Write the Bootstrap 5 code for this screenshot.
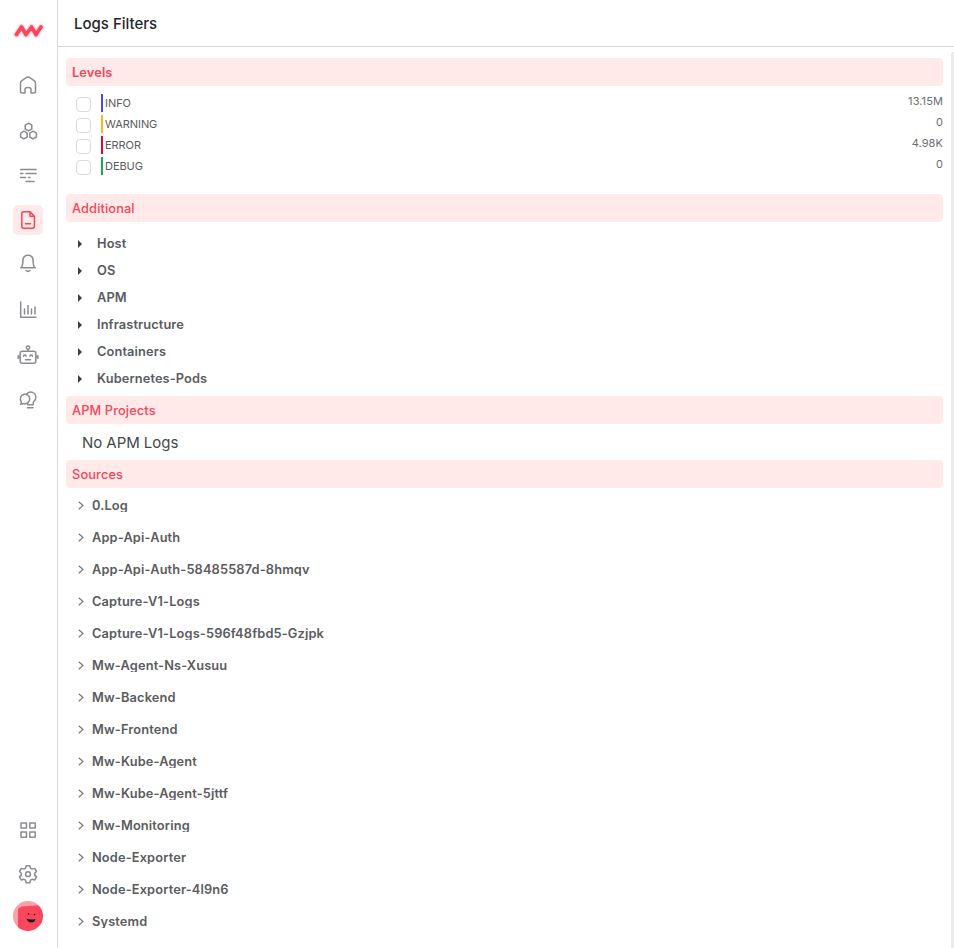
<!DOCTYPE html>
<html lang="en">
<head>
<meta charset="utf-8">
<meta name="viewport" content="width=device-width, initial-scale=1">
<title>Logs Filters</title>
<link href="https://cdn.jsdelivr.net/npm/bootstrap@5.3.0/dist/css/bootstrap.min.css" rel="stylesheet">
<style>
body{font-family:Inter,"Liberation Sans",sans-serif;color:#5a5b60;font-size:12.800px;letter-spacing:.12px;background:#fff}
.side{width:58px;border-right:1px solid #d9d9db;padding-right:1px}
.brand-mark{height:62px;padding-top:16px}
.side-link{height:45px;color:#8b8c90}
.side svg{display:block;fill:none;stroke:currentColor;stroke-width:1.5;stroke-linecap:round;stroke-linejoin:round}
.tile{width:30px;height:30px;border-radius:5px}
.tile.on{background:#ffeae9;color:#f5455c}
.side-foot{padding-bottom:17px}
.account{margin-top:4px}
.top{height:47px;border-bottom:1px solid #d9d9db;padding:2px 0 0 16px}
.top h1{font-size:15px;font-weight:500;color:#26262e;letter-spacing:0}
.filters{padding:11px 8px 0}
.head{height:28px;background:#ffeae9;color:#f5455c;border-radius:4px;padding:1px 0 0 6px;font-weight:500}
.head.first{font-weight:600}
.levels{padding:8px 0 16px 10px}
.level{height:21px;font-size:11px;line-height:18px;letter-spacing:-.05px}
.level .form-check-input{width:15px;height:15px;margin:3px 10px 0 0;border:1px solid #d9d9dc;border-radius:4px}
.tick{width:2px;height:18px;margin-right:2px}
.info{background:#4b48e5}.warning{background:#fcbc05}.error{background:#d90746}.debug{background:#0caf52}
.count{margin-top:-2px;color:#6d6e72;letter-spacing:.1px}
.extra{padding:8px 0 4px 12px}
.extra-row{height:27px;font-weight:600}
.extra-row svg{width:4px;height:8px;margin-right:15px;fill:#3d3e43}
.empty{height:36px;padding:2px 0 0 16px;font-size:15px;color:#45464c;letter-spacing:-.05px}
.sources{padding-left:12px;padding-top:1px}
.source{height:32px}
.source svg{width:6px;height:9px;margin-right:8px;margin-top:1px;fill:none;stroke:#77787c;stroke-width:1.2}
.source span{font-weight:600;line-height:13px;height:13px;overflow:hidden;letter-spacing:.15px}
.rail{width:3px;margin-top:5px;background:#ebebec;border-radius:3px 0 0 0}
</style>
</head>
<body class="vh-100 overflow-hidden">
<div class="d-flex h-100">
<nav class="side d-flex flex-column align-items-center flex-shrink-0">
  <div class="brand-mark"><svg width="36" height="28" viewBox="0 0 36 28"><path d="M6.500 18.500L11.500 11L16 18.500L21.500 11L26 18.500L31 11" stroke="#ffdadd" stroke-width="6.500"/><path d="M6.500 18.500L11.500 11L16 18.500L21.500 11L26 18.500L31 11" stroke="#f9465d" stroke-width="3.800"/></svg></div>
  <a class="side-link d-flex align-items-center" href="#" aria-label="Home"><span class="tile"><svg width="30" height="30" viewBox="0 0 30 30"><path d="M7.500 13Q7.500 11.700 8.500 10.900L13.400 7.500Q15 6.500 16.600 7.500L21.500 10.900Q22.500 11.700 22.500 13V21Q22.500 23 20.500 23H18V19.500Q18 17.500 15 17.500T12 19.500V23H9.500Q7.500 23 7.500 21Z"/></svg></span></a>
  <a class="side-link d-flex align-items-center" href="#" aria-label="Infrastructure"><span class="tile"><svg width="30" height="30" viewBox="0 0 30 30"><path d="M15.500 8.200L18.800 10.100V14L15.500 15.900L12.200 14V10.100ZM10.900 16.200L14.200 18.100V22L10.900 23.900L7.600 22V18.100ZM20.100 16.200L23.400 18.100V22L20.100 23.900L16.800 22V18.100Z"/></svg></span></a>
  <a class="side-link d-flex align-items-center" href="#" aria-label="Traces"><span class="tile"><svg width="30" height="30" viewBox="0 0 30 30"><path d="M7.500 9.500H23M7.500 13.500H10M13 13.500H23M7.500 17.500H12.500M15.500 17.500H17M13 21.500H21"/></svg></span></a>
  <a class="side-link d-flex align-items-center" href="#" aria-label="Logs"><span class="tile on"><svg width="30" height="30" viewBox="0 0 30 30"><path d="M10.700 6.800H17L21.400 11.200V21.300Q21.400 23.200 19.500 23.200H10.700Q8.800 23.200 8.800 21.300V8.700Q8.800 6.800 10.700 6.800ZM17 6.800V11.200H21.400M12.500 18.700H17.500"/></svg></span></a>
  <a class="side-link d-flex align-items-center" href="#" aria-label="Alerts"><span class="tile"><svg width="30" height="30" viewBox="0 0 30 30"><path d="M7.800 17.800Q9.800 16.500 9.800 11.800C9.800 7.500 11.800 5.300 15 5.300S20.200 7.500 20.200 11.800Q20.200 16.500 22.200 17.800ZM13 20.500Q15 22.300 17 20.500"/></svg></span></a>
  <a class="side-link d-flex align-items-center" href="#" aria-label="Dashboards"><span class="tile"><svg width="30" height="30" viewBox="0 0 30 30"><path d="M7.700 7V22.300H23M11.500 14V19M15 10.500V19M18.500 14V19M22 12V19"/></svg></span></a>
  <a class="side-link d-flex align-items-center" href="#" aria-label="Synthetic tests"><span class="tile"><svg width="30" height="30" viewBox="0 0 30 30"><rect x="7.200" y="11.300" width="15.600" height="11.900" rx="2"/><circle cx="15" cy="7.600" r="1.700"/><path d="M15 9.500V11M5.200 15.500V18.500M24.800 15.500V18.500M5.200 17H7M23 17H24.800M10.500 16.200Q11.800 14 13.100 16.200M16.900 16.200Q18.200 14 19.500 16.200M12.500 19.700H17.500"/></svg></span></a>
  <a class="side-link d-flex align-items-center" href="#" aria-label="Insights"><span class="tile"><svg width="30" height="30" viewBox="0 0 30 30"><path d="M13.200 9.200C14.500 7.500 16 6.900 17.500 6.900C20.500 6.900 22.900 9.200 22.900 12.300C22.900 14.500 21.700 16 20.300 17.200V19.700H14.600V18M14.500 22.700H20"/><path d="M7.700 19.200L8.300 16.800A4.700 4.700 0 1 1 10.800 18.500Z"/></svg></span></a>
  <div class="side-foot mt-auto">
    <a class="side-link d-flex align-items-center" href="#" aria-label="Integrations"><span class="tile"><svg width="30" height="30" viewBox="0 0 30 30"><path d="M8 8H13.500V13H8ZM16.800 8H22.200V13H16.800ZM8 17H13.500V22.300H8ZM16.800 17H22.200V22.300H16.800Z"/></svg></span></a>
    <a class="side-link d-flex align-items-center" href="#" aria-label="Settings"><span class="tile"><svg width="30" height="30" viewBox="0 0 30 30"><circle cx="15" cy="14.200" r="2.400"/><path d="M13.200 5.700H16.800L17.500 8.200L19.100 9.100L21.700 8.400L23.500 11.500L21.600 13.300V15.100L23.500 16.900L21.700 20L19.100 19.300L17.500 20.200L16.800 22.700H13.200L12.500 20.200L10.900 19.300L8.300 20L6.500 16.900L8.400 15.100V13.300L6.500 11.500L8.300 8.400L10.900 9.100L12.500 8.200Z"/></svg></span></a>
    <svg class="account" width="30" height="30" viewBox="0 0 30 30" role="img" aria-label="Account"><defs><clipPath id="round"><circle cx="15" cy="15" r="15"/></clipPath></defs><g clip-path="url(#round)" stroke="none"><path d="M0 0H30V30H0Z" fill="#ffa0a8"/><path d="M5 30V10Q5 6 9 5.500L30 4V30Z" fill="#fb465e"/><circle cx="15.500" cy="13" r=".8" fill="#111"/><circle cx="21.500" cy="13.500" r=".8" fill="#111"/><path d="M13.500 17.800Q18 19.200 22.500 18Q22 21.500 18.300 21.500Q14.800 21.500 13.500 17.800Z" fill="#111"/></g></svg>
  </div>
</nav>
<main class="d-flex flex-column flex-grow-1">
  <header class="top d-flex align-items-center flex-shrink-0"><h1 class="m-0">Logs Filters</h1></header>
  <div class="d-flex flex-grow-1">
    <div class="filters flex-grow-1">
      <div class="head first d-flex align-items-center">Levels</div>
      <div class="levels">
        <label class="level d-flex"><input class="form-check-input" type="checkbox"><i class="tick info"></i>INFO<span class="count ms-auto">13.15M</span></label>
        <label class="level d-flex"><input class="form-check-input" type="checkbox"><i class="tick warning"></i>WARNING<span class="count ms-auto">0</span></label>
        <label class="level d-flex"><input class="form-check-input" type="checkbox"><i class="tick error"></i>ERROR<span class="count ms-auto">4.98K</span></label>
        <label class="level d-flex"><input class="form-check-input" type="checkbox"><i class="tick debug"></i>DEBUG<span class="count ms-auto">0</span></label>
      </div>
      <div class="head d-flex align-items-center">Additional</div>
      <div class="extra">
        <div class="extra-row d-flex align-items-center"><svg viewBox="0 0 4 8"><path d="M0 0L4 4L0 8Z"/></svg>Host</div>
        <div class="extra-row d-flex align-items-center"><svg viewBox="0 0 4 8"><path d="M0 0L4 4L0 8Z"/></svg>OS</div>
        <div class="extra-row d-flex align-items-center"><svg viewBox="0 0 4 8"><path d="M0 0L4 4L0 8Z"/></svg>APM</div>
        <div class="extra-row d-flex align-items-center"><svg viewBox="0 0 4 8"><path d="M0 0L4 4L0 8Z"/></svg>Infrastructure</div>
        <div class="extra-row d-flex align-items-center"><svg viewBox="0 0 4 8"><path d="M0 0L4 4L0 8Z"/></svg>Containers</div>
        <div class="extra-row d-flex align-items-center"><svg viewBox="0 0 4 8"><path d="M0 0L4 4L0 8Z"/></svg>Kubernetes-Pods</div>
      </div>
      <div class="head d-flex align-items-center">APM Projects</div>
      <div class="empty d-flex align-items-center">No APM Logs</div>
      <div class="head d-flex align-items-center">Sources</div>
      <div class="sources">
        <div class="source d-flex align-items-center"><svg viewBox="0 0 6 9"><path d="M.7 .7L5 4.500L.7 8.300"/></svg><span>0.Log</span></div>
        <div class="source d-flex align-items-center"><svg viewBox="0 0 6 9"><path d="M.7 .7L5 4.500L.7 8.300"/></svg><span>App-Api-Auth</span></div>
        <div class="source d-flex align-items-center"><svg viewBox="0 0 6 9"><path d="M.7 .7L5 4.500L.7 8.300"/></svg><span>App-Api-Auth-58485587d-8hmqv</span></div>
        <div class="source d-flex align-items-center"><svg viewBox="0 0 6 9"><path d="M.7 .7L5 4.500L.7 8.300"/></svg><span>Capture-V1-Logs</span></div>
        <div class="source d-flex align-items-center"><svg viewBox="0 0 6 9"><path d="M.7 .7L5 4.500L.7 8.300"/></svg><span>Capture-V1-Logs-596f48fbd5-Gzjpk</span></div>
        <div class="source d-flex align-items-center"><svg viewBox="0 0 6 9"><path d="M.7 .7L5 4.500L.7 8.300"/></svg><span>Mw-Agent-Ns-Xusuu</span></div>
        <div class="source d-flex align-items-center"><svg viewBox="0 0 6 9"><path d="M.7 .7L5 4.500L.7 8.300"/></svg><span>Mw-Backend</span></div>
        <div class="source d-flex align-items-center"><svg viewBox="0 0 6 9"><path d="M.7 .7L5 4.500L.7 8.300"/></svg><span>Mw-Frontend</span></div>
        <div class="source d-flex align-items-center"><svg viewBox="0 0 6 9"><path d="M.7 .7L5 4.500L.7 8.300"/></svg><span>Mw-Kube-Agent</span></div>
        <div class="source d-flex align-items-center"><svg viewBox="0 0 6 9"><path d="M.7 .7L5 4.500L.7 8.300"/></svg><span>Mw-Kube-Agent-5jttf</span></div>
        <div class="source d-flex align-items-center"><svg viewBox="0 0 6 9"><path d="M.7 .7L5 4.500L.7 8.300"/></svg><span>Mw-Monitoring</span></div>
        <div class="source d-flex align-items-center"><svg viewBox="0 0 6 9"><path d="M.7 .7L5 4.500L.7 8.300"/></svg><span>Node-Exporter</span></div>
        <div class="source d-flex align-items-center"><svg viewBox="0 0 6 9"><path d="M.7 .7L5 4.500L.7 8.300"/></svg><span>Node-Exporter-4l9n6</span></div>
        <div class="source d-flex align-items-center"><svg viewBox="0 0 6 9"><path d="M.7 .7L5 4.500L.7 8.300"/></svg><span>Systemd</span></div>
      </div>
    </div>
    <div class="rail flex-shrink-0"></div>
  </div>
</main>
</div>
<script src="https://cdn.jsdelivr.net/npm/bootstrap@5.3.0/dist/js/bootstrap.bundle.min.js"></script>
</body>
</html>
